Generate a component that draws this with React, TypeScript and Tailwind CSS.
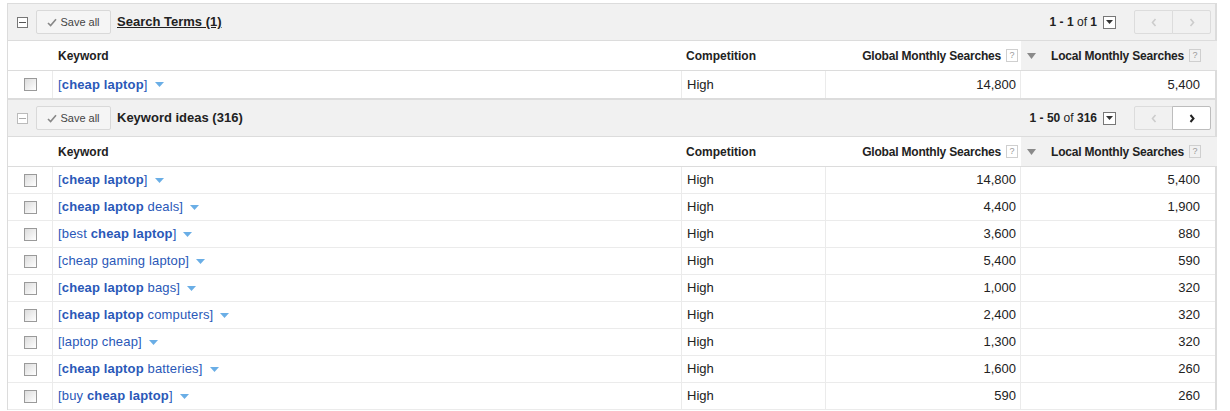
import React from "react";

type Row = { kw: React.ReactNode; comp: string; g: string; l: string };

const B = ({ children }: { children: React.ReactNode }) => <b className="font-bold">{children}</b>;

const ideas: Row[] = [
  { kw: <>[<B>cheap laptop</B>]</>, comp: "High", g: "14,800", l: "5,400" },
  { kw: <>[<B>cheap laptop</B> deals]</>, comp: "High", g: "4,400", l: "1,900" },
  { kw: <>[best <B>cheap laptop</B>]</>, comp: "High", g: "3,600", l: "880" },
  { kw: <>[cheap gaming laptop]</>, comp: "High", g: "5,400", l: "590" },
  { kw: <>[<B>cheap laptop</B> bags]</>, comp: "High", g: "1,000", l: "320" },
  { kw: <>[<B>cheap laptop</B> computers]</>, comp: "High", g: "2,400", l: "320" },
  { kw: <>[laptop cheap]</>, comp: "High", g: "1,300", l: "320" },
  { kw: <>[<B>cheap laptop</B> batteries]</>, comp: "High", g: "1,600", l: "260" },
  { kw: <>[buy <B>cheap laptop</B>]</>, comp: "High", g: "590", l: "260" },
];

function Checkbox() {
  return (
    <div className="w-[13px] h-[13px] border border-[#9a9a9a] bg-gradient-to-br from-[#dcdcdc] to-[#ffffff]" />
  );
}

function Caret() {
  return (
    <svg width="9" height="5" viewBox="0 0 9 5" className="ml-[7px] inline-block">
      <path d="M0 0H9L4.5 5Z" fill="#6aaee6" />
    </svg>
  );
}

function Help() {
  return (
    <span className="inline-flex items-center justify-center w-[12px] h-[13px] border border-[#cfcfcf] text-[9px] text-[#999] font-normal ml-[5px] leading-none">
      ?
    </span>
  );
}

function SaveAll() {
  return (
    <button className="h-[24px] w-[75px] border border-[#d9d9d9] bg-[#f5f5f5] rounded-[2px] flex items-center justify-center gap-[3px] text-[11px] text-[#444]">
      <svg width="10" height="9" viewBox="0 0 10 9">
        <path d="M1 5L3.6 7.6L9 1.2" stroke="#888" strokeWidth="1.6" fill="none" />
      </svg>
      Save all
    </button>
  );
}

function Toolbar({
  title,
  underline,
  range,
  total,
  nextActive,
  minusDark,
}: {
  title: string;
  underline: boolean;
  range: string;
  total: string;
  nextActive: boolean;
  minusDark: boolean;
}) {
  return (
    <div className="h-[37px] bg-[#f1f1f1] border-b border-[#dcdcdc] flex items-center">
      <div className="pl-[9px]">
        <div
          className={`w-[11px] h-[11px] border bg-white flex items-center justify-center ${
            minusDark ? "border-[#777]" : "border-[#bbb]"
          }`}
        >
          <div className={`w-[7px] h-[1px] ${minusDark ? "bg-[#555]" : "bg-[#aaa]"}`} />
        </div>
      </div>
      <div className="ml-[8px]">
        <SaveAll />
      </div>
      <div className={`ml-[6px] text-[13px] font-bold text-[#222] ${underline ? "underline" : ""}`}>{title}</div>
      <div className="ml-auto flex items-center text-[12px] text-[#222]">
        <span>
          <b>{range}</b> of <b>{total}</b>
        </span>
        <div className="ml-[6px] w-[13px] h-[13px] border border-[#777] bg-white flex items-center justify-center">
          <svg width="7" height="4" viewBox="0 0 7 4">
            <path d="M0 0H7L3.5 4Z" fill="#333" />
          </svg>
        </div>
        <div className="ml-[18px] mr-[4px] flex">
          <div className="w-[39px] h-[24px] border border-[#dcdcdc] rounded-l-[2px] bg-[#f1f1f1] flex items-center justify-center">
            <svg width="6" height="9" viewBox="0 0 6 9">
              <path d="M4.5 1L1.5 4.5L4.5 8" stroke="#ccc" strokeWidth="1.6" fill="none" />
            </svg>
          </div>
          <div
            className={`w-[39px] h-[24px] border rounded-r-[2px] -ml-[1px] flex items-center justify-center ${
              nextActive ? "border-[#bdbdbd] bg-white" : "border-[#dcdcdc] bg-[#f1f1f1]"
            }`}
          >
            <svg width="6" height="9" viewBox="0 0 6 9">
              <path
                d="M1.5 1L4.5 4.5L1.5 8"
                stroke={nextActive ? "#222" : "#ccc"}
                strokeWidth={nextActive ? 2 : 1.6}
                fill="none"
              />
            </svg>
          </div>
        </div>
      </div>
    </div>
  );
}

function ColHeader() {
  return (
    <div className="h-[30px] flex border-b border-[#dcdcdc] text-[12px] font-bold text-[#222] bg-white">
      <div className="w-[45px] shrink-0" />
      <div className="w-[628px] shrink-0 flex items-center pl-[5px]">Keyword</div>
      <div className="w-[145px] shrink-0 flex items-center pl-[5px]">Competition</div>
      <div className="w-[195px] shrink-0 flex items-center justify-end pr-[3px]">
        <span className="tracking-[-0.2px]">Global Monthly Searches</span>
        <Help />
      </div>
      <div className="w-[196px] shrink-0 flex items-center bg-[#f1f1f1] pl-[6px] pr-[16px]">
        <svg width="9" height="6" viewBox="0 0 9 6">
          <path d="M0 0H9L4.5 6Z" fill="#8a8a8a" />
        </svg>
        <span className="ml-auto tracking-[-0.2px]">Local Monthly Searches</span>
        <Help />
      </div>
    </div>
  );
}

function DataRow({ r, last }: { r: Row; last?: boolean }) {
  return (
    <div className={`h-[27px] flex text-[13px] text-[#222] bg-white ${last ? "" : "border-b border-[#ebebeb]"}`}>
      <div className="w-[45px] shrink-0 flex items-center justify-center border-r border-[#ebebeb]">
        <Checkbox />
      </div>
      <div className="w-[628px] shrink-0 flex items-center pl-[5px] text-[#2a58b8] tracking-[0.15px]">
        <span>{r.kw}</span>
        <Caret />
      </div>
      <div className="w-[145px] shrink-0 flex items-center pl-[5px] border-l border-r border-[#ebebeb]">{r.comp}</div>
      <div className="w-[195px] shrink-0 flex items-center justify-end pr-[4px] border-r border-[#ebebeb]">{r.g}</div>
      <div className="w-[195px] shrink-0 flex items-center justify-end pr-[16px]">{r.l}</div>
    </div>
  );
}

export default function App() {
  return (
    <div className="bg-white w-[1230px] h-[411px] overflow-hidden pt-[3px] pl-[7px]" style={{ fontFamily: '"Liberation Sans", Arial, sans-serif' }}>
      <div className="w-[1210px] border-t border-l border-r-2 border-[#dcdcdc]">
        <Toolbar title="Search Terms (1)" underline range="1 - 1" total="1" nextActive={false} minusDark />
        <ColHeader />
        <DataRow r={ideas[0]} last />
        <div className="border-t-2 border-[#dcdcdc]">
          <Toolbar title="Keyword ideas (316)" underline={false} range="1 - 50" total="316" nextActive minusDark={false} />
        </div>
        <ColHeader />
        {ideas.map((r, i) => (
          <DataRow key={i} r={r} />
        ))}
      </div>
    </div>
  );
}
